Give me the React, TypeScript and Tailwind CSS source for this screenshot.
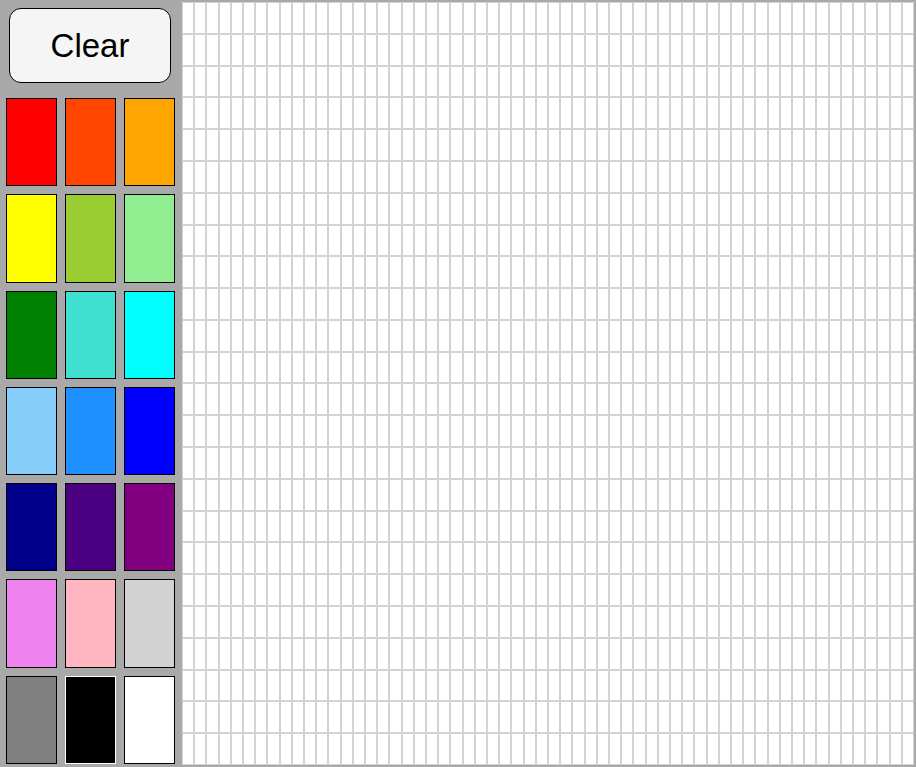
import { useState } from "react";

const COLORS = [
  "#ff0000", "#ff4500", "#ffa500",
  "#ffff00", "#9acd32", "#90ee90",
  "#008000", "#40e0d0", "#00ffff",
  "#87cefa", "#1e90ff", "#0000ff",
  "#00008b", "#4b0082", "#800080",
  "#ee82ee", "#ffb6c1", "#d3d3d3",
  "#808080", "#000000", "#ffffff",
];

const COLS = 60;
const ROWS = 24;

export default function App() {
  const [selected, setSelected] = useState("#000000");
  const [cells, setCells] = useState<Record<number, string>>({});

  function paint(i: number) {
    setCells((prev) => ({ ...prev, [i]: selected }));
  }

  return (
    <div className="flex h-[767px] w-[916px] bg-[#a9a9a9] font-['Liberation_Sans',Arial,sans-serif]">
      {/* Sidebar */}
      <div className="flex w-[182px] shrink-0 flex-col">
        <button
          onClick={() => setCells({})}
          className="mx-[9px] mt-[8px] h-[75px] w-[162px] rounded-[12px] border border-black bg-[#f5f5f5] text-[33px] text-black"
        >
          Clear
        </button>
        <div className="mt-[15px] mb-[3px] ml-[6px] grid flex-1 grid-cols-[repeat(3,51px)] grid-rows-[repeat(7,1fr)] gap-[8px]">
          {COLORS.map((c) => (
            <button
              key={c}
              onClick={() => setSelected(c)}
              style={{ backgroundColor: c }}
              className={`border ${selected === c ? "border-white" : "border-black"}`}
            />
          ))}
        </div>
      </div>

      {/* Canvas */}
      <div className="my-[2px] mr-[2px] grid flex-1 grid-cols-[repeat(60,1fr)] grid-rows-[repeat(24,1fr)]">
        {Array.from({ length: COLS * ROWS }).map((_, i) => (
          <div
            key={i}
            onMouseDown={() => paint(i)}
            style={cells[i] ? { backgroundColor: cells[i] } : undefined}
            className="border border-[#d3d3d3] bg-white"
          />
        ))}
      </div>
    </div>
  );
}
